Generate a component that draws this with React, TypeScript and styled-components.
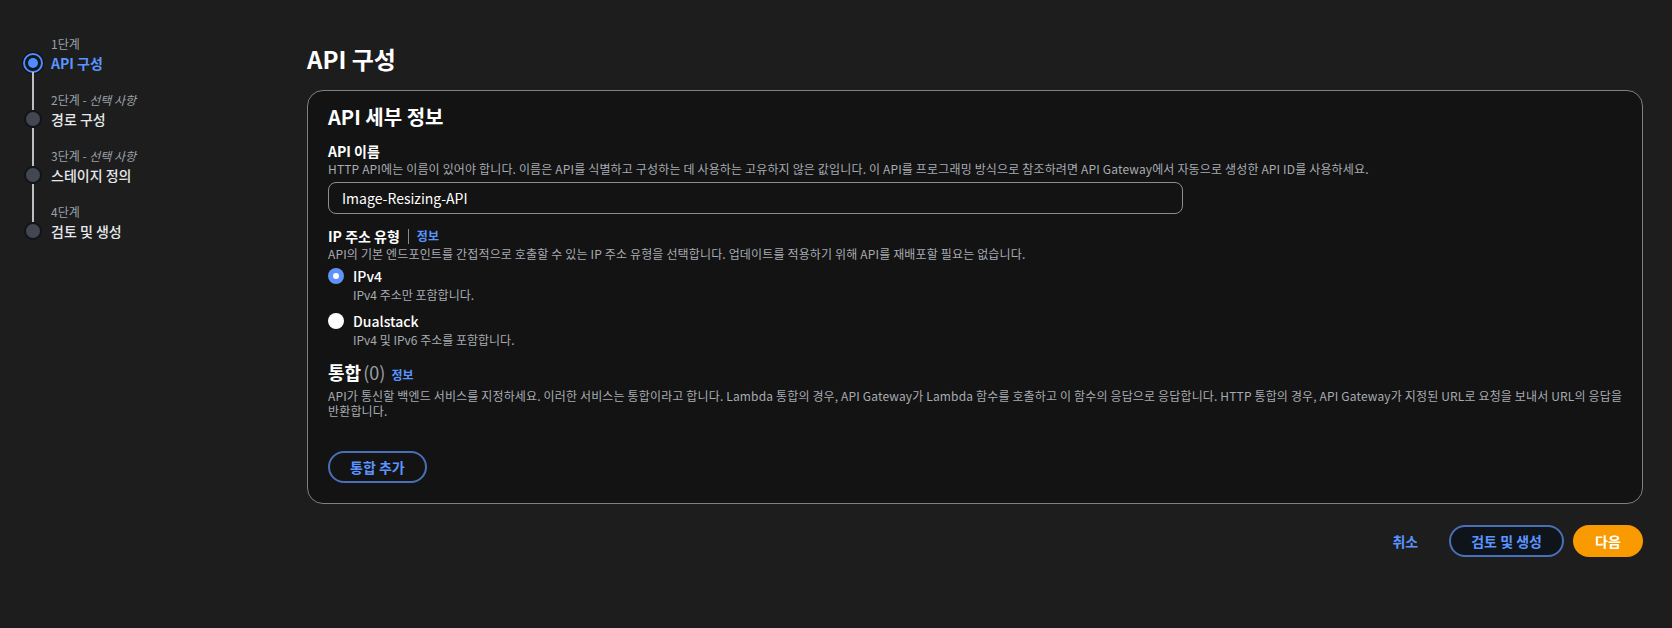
import React from "react";
import styled, { createGlobalStyle } from "styled-components";

const Global = createGlobalStyle`
  html, body { margin: 0; padding: 0; background: #1d1d1d; }
  body { font-family: "Noto Sans CJK KR", "Noto Sans", sans-serif; color: #e9ebed; }
  * { box-sizing: border-box; }
`;

const Page = styled.div`
  display: flex;
  width: 1672px;
  min-height: 628px;
  background: #1d1d1d;
`;

const Sidebar = styled.nav`
  width: 307px;
  flex: none;
  padding: 36px 0 0 23px;
  display: flex;
  flex-direction: column;
`;

const Step = styled.div`
  display: grid;
  grid-template-columns: 20px 1fr;
  grid-template-rows: 16px 22px 1fr;
  column-gap: 8px;
  height: 56px;
`;

const Rail = styled.div`
  grid-column: 1;
  grid-row: 1 / 4;
  display: flex;
  flex-direction: column;
  align-items: center;
`;

const Segment = styled.div<{ $hidden?: boolean; $grow?: boolean }>`
  width: 2px;
  background: ${(p) => (p.$hidden ? "transparent" : "#bcbec3")};
  ${(p) => (p.$grow ? "flex: 1;" : "height: 18px; flex: none;")}
`;

const Dot = styled.div<{ $active?: boolean }>`
  flex: none;
  border-radius: 50%;
  ${(p) =>
    p.$active
      ? `width: 20px; height: 20px; margin: -1px 0; border: 2px solid #4e8cff; background: #0f141a; box-shadow: 0 0 0 1px #0d0f12; display:flex; align-items:center; justify-content:center;`
      : `width: 18px; height: 18px; border: 2px solid #121418; background: #434751;`}
`;

const InnerDot = styled.div`
  width: 10px;
  height: 10px;
  border-radius: 50%;
  background: #4e8cff;
`;

const StepLabel = styled.div`
  grid-column: 2;
  grid-row: 1;
  font-size: 12px;
  line-height: 16px;
  color: #9ba1a9;
  white-space: nowrap;
  em { font-style: italic; }
`;

const StepTitle = styled.div<{ $active?: boolean }>`
  grid-column: 2;
  grid-row: 2;
  font-size: 14px;
  line-height: 22px;
  font-weight: ${(p) => (p.$active ? 700 : 500)};
  color: ${(p) => (p.$active ? "#5a95ff" : "#e6e8eb")};
`;

const Main = styled.main`
  width: 1336px;
  flex: none;
  display: flex;
  flex-direction: column;
  padding-top: 44px;
`;

const PageTitle = styled.h1`
  margin: 0 0 16px;
  font-size: 24px;
  line-height: 30px;
  font-weight: 700;
  color: #ffffff;
`;

const Card = styled.section`
  border: 1px solid #808080;
  border-radius: 16px;
  background: #131313;
  padding: 13px 10px 20px 20px;
  display: flex;
  flex-direction: column;
`;

const CardTitle = styled.h2`
  margin: 0 0 11px;
  font-size: 20px;
  line-height: 26px;
  font-weight: 700;
  color: #ffffff;
`;

const Field = styled.div<{ $gap?: number }>`
  display: flex;
  flex-direction: column;
  margin-bottom: ${(p) => p.$gap ?? 0}px;
`;

const Label = styled.div`
  font-size: 14px;
  line-height: 20px;
  font-weight: 700;
  color: #ffffff;
  display: flex;
  align-items: center;
`;

const Divider = styled.span`
  display: inline-block;
  width: 1px;
  height: 15px;
  background: #8a8a8a;
  margin: 0 8px 0 8px;
`;

const InfoLink = styled.a`
  font-size: 12px;
  font-weight: 700;
  color: #5a95ff;
  text-decoration: none;
  cursor: pointer;
`;

const Desc = styled.div`
  font-size: 12px;
  line-height: 16px;
  letter-spacing: 0.15px;
  color: #a7abb2;
`;

const Input = styled.input`
  margin-top: 5px;
  width: 855px;
  height: 32px;
  border: 1px solid #8d8d8d;
  border-radius: 8px;
  background: #131313;
  color: #ffffff;
  font-family: inherit;
  font-size: 14px;
  padding: 0 13px;
  outline: none;
`;

const RadioGroup = styled.div`
  display: flex;
  flex-direction: column;
  gap: 8px;
  margin-top: 4px;
`;

const RadioRow = styled.label`
  display: grid;
  grid-template-columns: 16px 1fr;
  column-gap: 9px;
  align-items: start;
`;

const RadioCircle = styled.span<{ $checked?: boolean }>`
  width: 16px;
  height: 16px;
  margin-top: 2px;
  border-radius: 50%;
  display: flex;
  align-items: center;
  justify-content: center;
  background: ${(p) => (p.$checked ? "#5f93f7" : "#ffffff")};
  &::after {
    content: "";
    width: 6px;
    height: 6px;
    border-radius: 50%;
    background: ${(p) => (p.$checked ? "#ffffff" : "transparent")};
  }
`;

const RadioText = styled.div`
  display: flex;
  flex-direction: column;
`;

const RadioTitle = styled.div`
  font-size: 14px;
  line-height: 20px;
  font-weight: 500;
  color: #ffffff;
`;

const RadioSub = styled.div`
  font-size: 12px;
  line-height: 16px;
  color: #a7abb2;
  margin-top: 1px;
`;

const SectionTitle = styled.div`
  margin-top: 12px;
  display: flex;
  align-items: baseline;
  gap: 6px;
  font-size: 18px;
  line-height: 24px;
  font-weight: 700;
  color: #ffffff;
`;

const Count = styled.span`
  font-weight: 400;
  color: #9aa0a7;
  margin-left: -2px;
`;

const WrapDesc = styled(Desc)`
  line-height: 15px;
  margin-top: 1px;
  word-break: keep-all;
`;

const OutlineButton = styled.button`
  height: 32px;
  padding: 0 20px;
  border: 2px solid #4a6fb9;
  border-radius: 16px;
  background: #0f141a;
  color: #5a95ff;
  font-family: inherit;
  font-size: 14px;
  font-weight: 700;
  cursor: pointer;
  white-space: nowrap;
`;

const AddButton = styled(OutlineButton)`
  align-self: flex-start;
  margin-top: 33px;
  background: transparent;
`;

const Footer = styled.div`
  display: flex;
  justify-content: flex-end;
  align-items: center;
  gap: 9px;
  margin-top: 21px;
`;

const TextButton = styled.button`
  border: none;
  background: transparent;
  color: #5a95ff;
  font-family: inherit;
  font-size: 14px;
  font-weight: 700;
  padding: 0 20px;
  height: 32px;
  margin-right: 2px;
  cursor: pointer;
`;

const PrimaryButton = styled.button`
  height: 32px;
  width: 70px;
  border: none;
  border-radius: 16px;
  background: #f89a00;
  color: #ffffff;
  font-family: inherit;
  font-size: 14px;
  font-weight: 700;
  cursor: pointer;
`;

type StepData = { label: React.ReactNode; title: string };

const steps: StepData[] = [
  { label: "1단계", title: "API 구성" },
  { label: <>2단계 - <em>선택 사항</em></>, title: "경로 구성" },
  { label: <>3단계 - <em>선택 사항</em></>, title: "스테이지 정의" },
  { label: "4단계", title: "검토 및 생성" },
];

export default function App() {
  return (
    <>
      <Global />
      <Page>
        <Sidebar>
          {steps.map((s, i) => (
            <Step key={i}>
              <Rail>
                <Segment $hidden={i === 0} />
                <Dot $active={i === 0}>{i === 0 && <InnerDot />}</Dot>
                <Segment $hidden={i === steps.length - 1} $grow />
              </Rail>
              <StepLabel>{s.label}</StepLabel>
              <StepTitle $active={i === 0}>{s.title}</StepTitle>
            </Step>
          ))}
        </Sidebar>
        <Main>
          <PageTitle>API 구성</PageTitle>
          <Card>
            <CardTitle>API 세부 정보</CardTitle>
            <Field $gap={12}>
              <Label>API 이름</Label>
              <Desc>
                HTTP API에는 이름이 있어야 합니다. 이름은 API를 식별하고 구성하는 데 사용하는 고유하지 않은 값입니다. 이 API를 프로그래밍 방식으로 참조하려면 API Gateway에서 자동으로 생성한 API ID를 사용하세요.
              </Desc>
              <Input defaultValue="Image-Resizing-API" />
            </Field>
            <Field>
              <Label>
                IP 주소 유형<Divider />
                <InfoLink>정보</InfoLink>
              </Label>
              <Desc>
                API의 기본 엔드포인트를 간접적으로 호출할 수 있는 IP 주소 유형을 선택합니다. 업데이트를 적용하기 위해 API를 재배포할 필요는 없습니다.
              </Desc>
              <RadioGroup>
                <RadioRow>
                  <RadioCircle $checked />
                  <RadioText>
                    <RadioTitle>IPv4</RadioTitle>
                    <RadioSub>IPv4 주소만 포함합니다.</RadioSub>
                  </RadioText>
                </RadioRow>
                <RadioRow>
                  <RadioCircle />
                  <RadioText>
                    <RadioTitle>Dualstack</RadioTitle>
                    <RadioSub>IPv4 및 IPv6 주소를 포함합니다.</RadioSub>
                  </RadioText>
                </RadioRow>
              </RadioGroup>
            </Field>
            <SectionTitle>
              <span>
                통합 <Count>(0)</Count>
              </span>
              <InfoLink>정보</InfoLink>
            </SectionTitle>
            <WrapDesc>
              API가 통신할 백엔드 서비스를 지정하세요. 이러한 서비스는 통합이라고 합니다. Lambda 통합의 경우, API Gateway가 Lambda 함수를 호출하고 이 함수의 응답으로 응답합니다. HTTP 통합의 경우, API Gateway가 지정된 URL로 요청을 보내서 URL의 응답을 반환합니다.
            </WrapDesc>
            <AddButton>통합 추가</AddButton>
          </Card>
          <Footer>
            <TextButton>취소</TextButton>
            <OutlineButton>검토 및 생성</OutlineButton>
            <PrimaryButton>다음</PrimaryButton>
          </Footer>
        </Main>
      </Page>
    </>
  );
}
